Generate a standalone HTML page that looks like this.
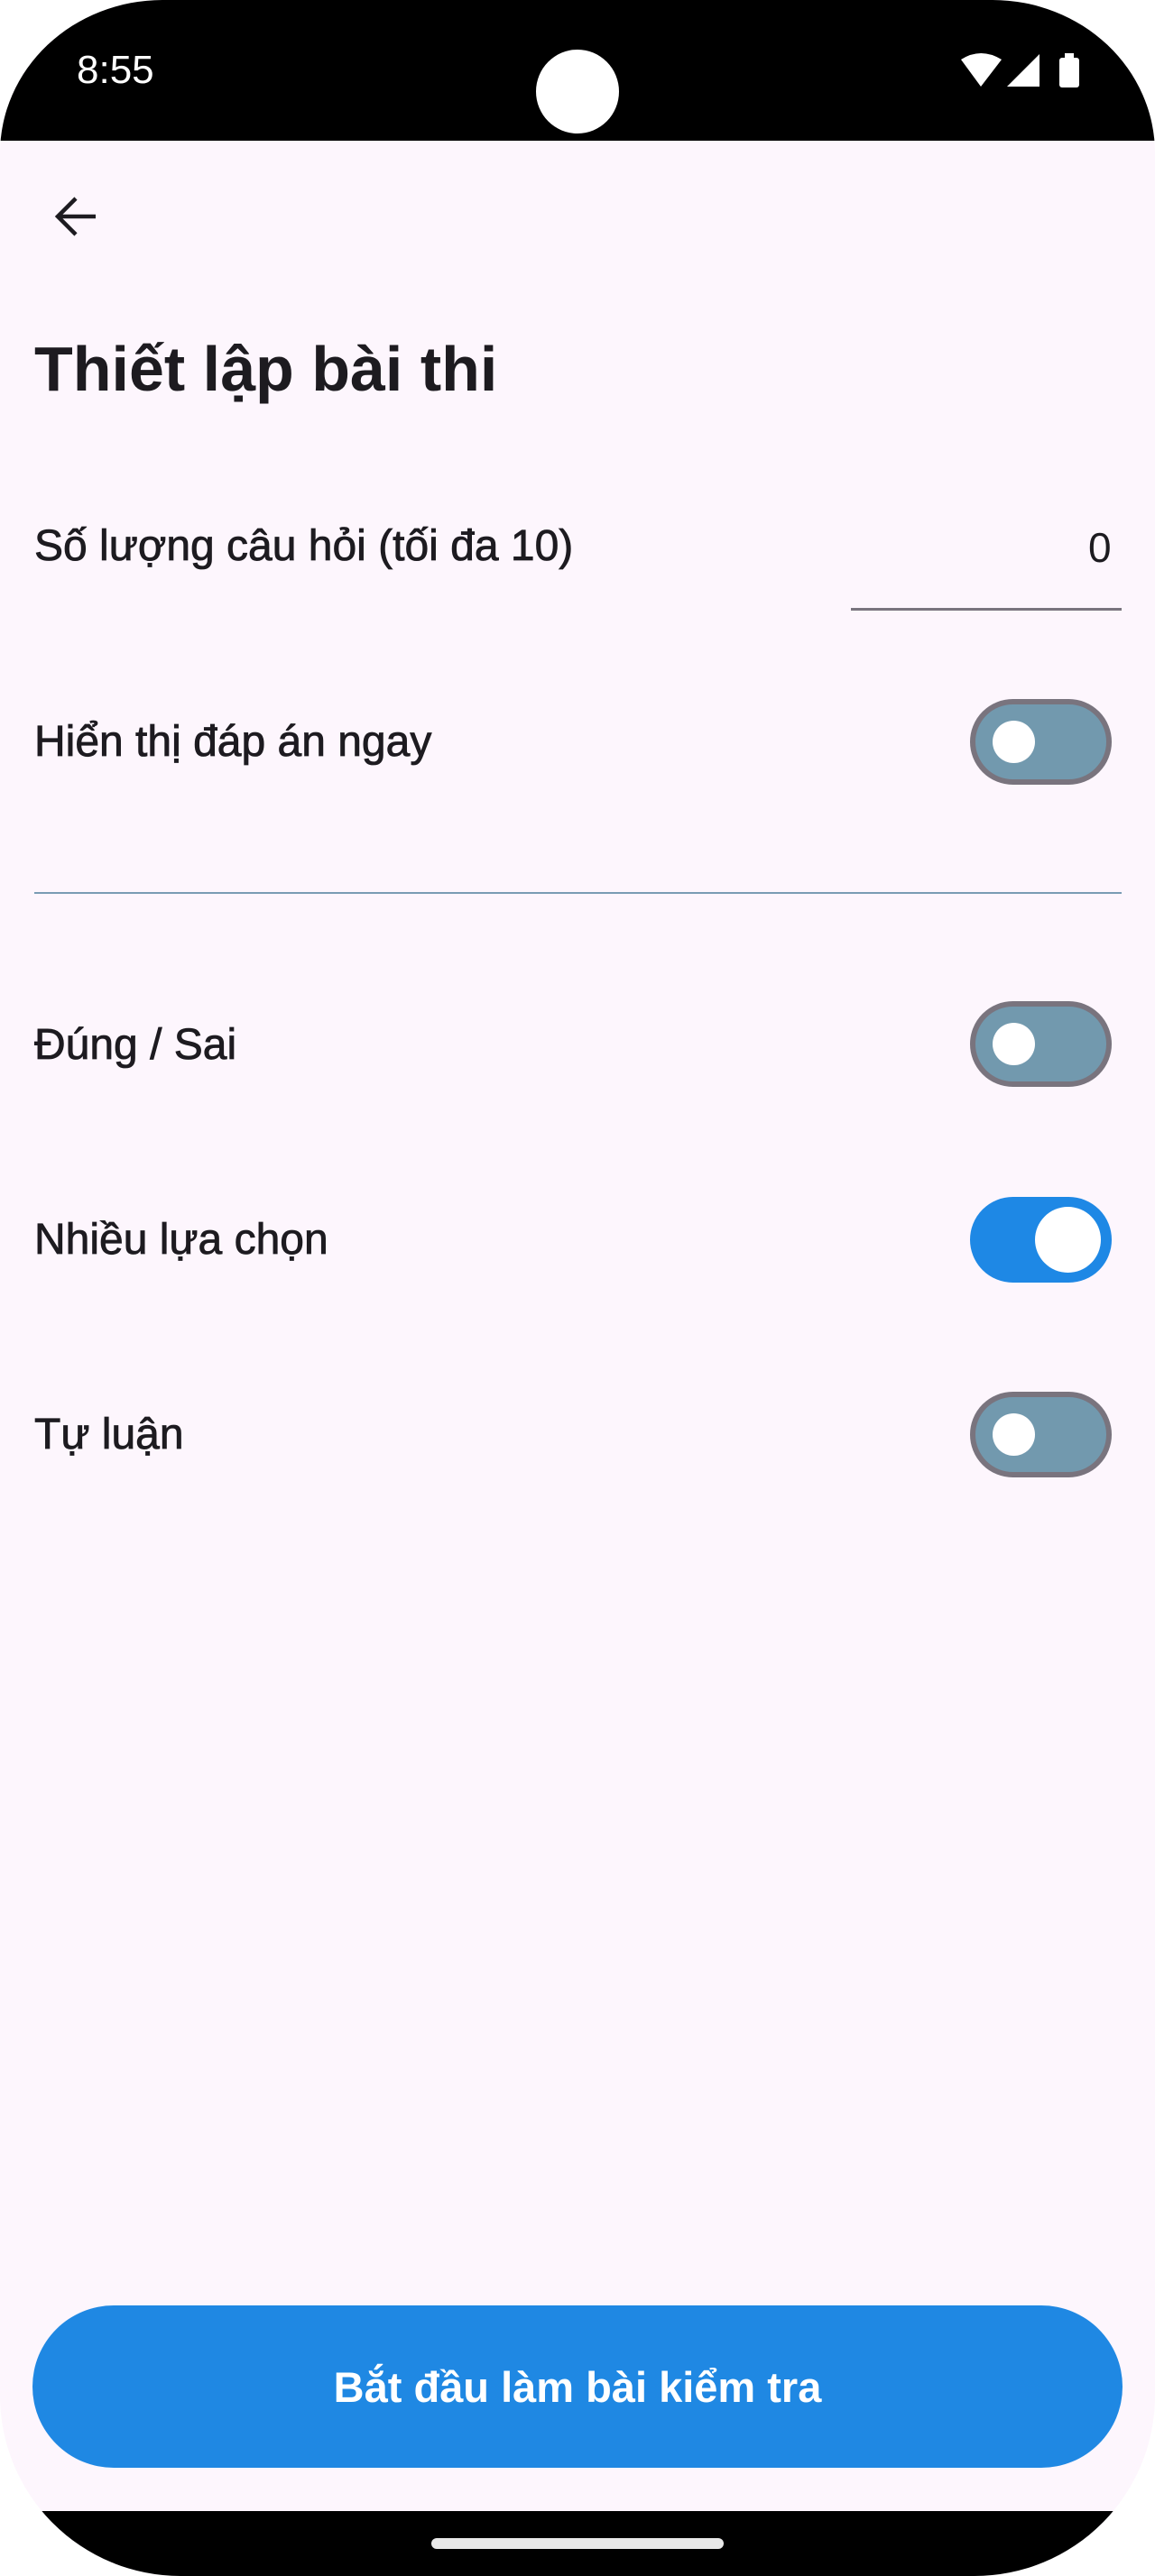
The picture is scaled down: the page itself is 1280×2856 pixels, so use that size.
<!DOCTYPE html>
<html><head><meta charset="utf-8"><style>
html,body{margin:0;padding:0;background:#fff;}
body{width:1280px;height:2856px;position:relative;overflow:hidden;font-family:"Liberation Sans","DejaVu Sans",sans-serif;}
.phone{position:absolute;left:0;top:0;width:1280px;height:2856px;background:#fdf6fd;border-radius:180px 180px 200px 200px/170px 170px 200px 200px;overflow:hidden;}
.status{position:absolute;left:0;top:0;width:1280px;height:156px;background:#000;}
.nav{position:absolute;left:0;top:2784px;width:1280px;height:72px;background:#000;}
.abs{position:absolute;}
.lbl{position:absolute;left:38px;font-size:48px;color:#1d1b20;line-height:1;transform:translateY(-50%);-webkit-text-stroke:0.8px #1d1b20;}
.sw{position:absolute;left:1075px;width:157px;height:95px;box-sizing:border-box;border-radius:48px;background:#7299ae;border:6px solid #79747e;}
.sw .t{position:absolute;left:19px;top:18px;width:47px;height:47px;border-radius:50%;background:#fff;}
.sw.on{background:#1e88e5;border-color:#1e88e5;}
.sw.on .t{left:66px;top:5px;width:73px;height:73px;}
</style></head><body>
<div class="phone">
  <div class="status">
    <div class="abs" style="left:85px;top:56px;font-size:44px;color:#fff;line-height:1;">8:55</div>
    <div class="abs" style="left:594px;top:55px;width:92px;height:93px;border-radius:50%;background:#fff;"></div>
    <svg class="abs" style="left:1062px;top:58px" width="140" height="42" viewBox="0 0 140 42">
      <path d="M3 8 Q25 -6 48 8 L25 38 Z" fill="#fff"/>
      <path d="M90 2 L90 38 L54 38 Z" fill="#fff"/>
      <rect x="112" y="6" width="22" height="33" rx="3" fill="#fff"/>
      <rect x="118" y="1" width="10" height="6" fill="#fff"/>
    </svg>
  </div>
  <svg class="abs" style="left:58px;top:216px" width="52" height="48" viewBox="0 0 52 48">
    <path d="M48 24 H6 M26 4 L6 24 L26 44" fill="none" stroke="#1d1b20" stroke-width="4.5"/>
  </svg>
  <div class="abs" style="left:38px;top:374px;font-size:70px;font-weight:700;color:#1d1b20;line-height:1;">Thiết lập bài thi</div>
  <div class="lbl" style="top:606px;">Số lượng câu hỏi (tối đa 10)</div>
  <div class="abs" style="left:1206px;top:584px;font-size:46px;color:#1d1b20;line-height:1;">0</div>
  <div class="abs" style="left:943px;top:674px;width:300px;height:3px;background:#79747e;"></div>
  <div class="lbl" style="top:823px;">Hiển thị đáp án ngay</div>
  <div class="sw" style="top:775px;"><div class="t"></div></div>
  <div class="abs" style="left:38px;top:989px;width:1205px;height:2px;background:#7a9cb4;"></div>
  <div class="lbl" style="top:1159px;">Đúng / Sai</div>
  <div class="sw" style="top:1110px;"><div class="t"></div></div>
  <div class="lbl" style="top:1375px;">Nhiều lựa chọn</div>
  <div class="sw on" style="top:1327px;"><div class="t"></div></div>
  <div class="lbl" style="top:1591px;">Tự luận</div>
  <div class="sw" style="top:1543px;"><div class="t"></div></div>
  <div class="abs" style="left:36px;top:2556px;width:1208px;height:180px;border-radius:90px;background:#1f88e3;color:#fff;font-size:47px;font-weight:700;display:flex;align-items:center;justify-content:center;">Bắt đầu làm bài kiểm tra</div>
  <div class="nav"><div class="abs" style="left:478px;top:30px;width:324px;height:12px;border-radius:6px;background:#e8e8e8;"></div></div>
</div>
</body></html>
